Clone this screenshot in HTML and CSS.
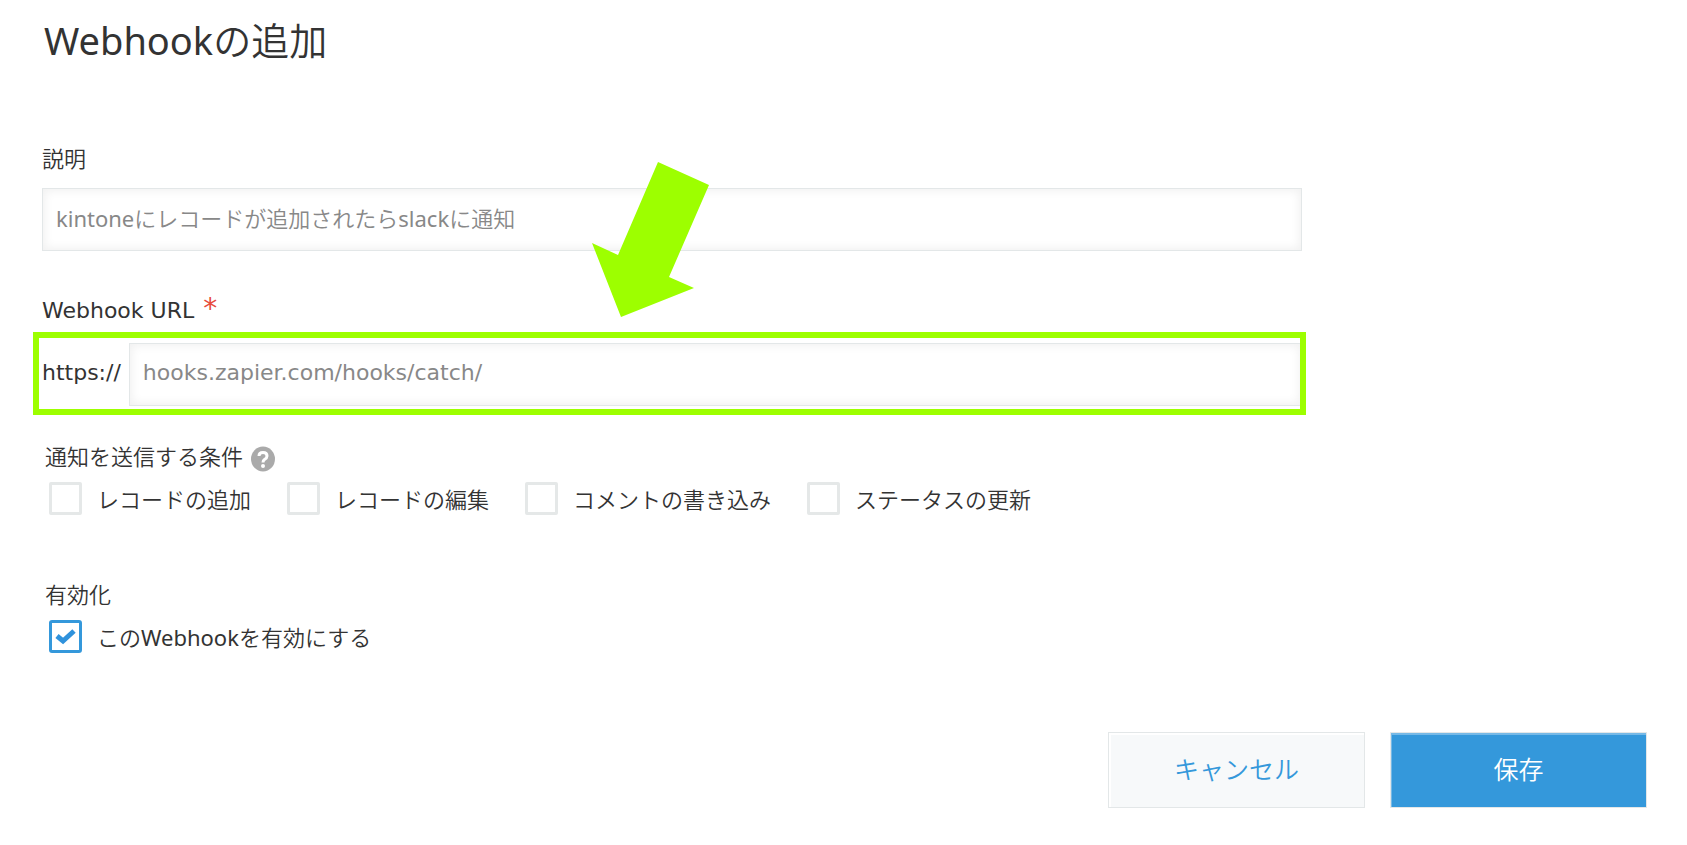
FILE: index.html
```html
<!DOCTYPE html>
<html lang="ja">
<head>
    <meta charset="UTF-8">
    <meta name="viewport" content="width=device-width, initial-scale=1.0">
    <title>Webhookの追加</title>
    <link rel="stylesheet" href="styles.css">
</head>
<body>
    <form class="webhook-form">
        <h1>Webhookの追加</h1>

        <div class="fields">
            <div class="field">
                <label for="description">説明</label>
                <input type="text" id="description" class="text-input" value="kintoneにレコードが追加されたらslackに通知">
            </div>

            <div class="field url-field">
                <label for="url" class="latin">Webhook URL <span class="required">*</span></label>
                <div class="url-row">
                    <span class="latin scheme">https://</span>
                    <input type="text" id="url" class="text-input latin" value="hooks.zapier.com/hooks/catch/">
                </div>
                <svg class="arrow" width="118" height="156" viewBox="0 0 118 156" aria-hidden="true">
                    <path d="M66 0 L117 23 L77 115 L102 126 L29 155 L0 81 L26 93 Z" fill="#9dff00"/>
                </svg>
            </div>
        </div>

        <fieldset class="conditions">
            <legend>通知を送信する条件
                <svg class="help" width="24" height="26" viewBox="0 0 24 26" aria-hidden="true">
                    <ellipse cx="12" cy="13" rx="12" ry="12.500" fill="#aaa"/>
                    <path d="M8 10 Q8 6.500 12 6.500 Q16 6.500 16 10 Q16 12 13.500 13.500 Q12 14.500 12 16.500" fill="none" stroke="#fff" stroke-width="3"/>
                    <circle cx="12" cy="20" r="2" fill="#fff"/>
                </svg>
            </legend>
            <div class="checks">
                <label class="check"><input type="checkbox">レコードの追加</label>
                <label class="check"><input type="checkbox">レコードの編集</label>
                <label class="check"><input type="checkbox">コメントの書き込み</label>
                <label class="check"><input type="checkbox">ステータスの更新</label>
            </div>
        </fieldset>

        <fieldset class="activation">
            <legend>有効化</legend>
            <div class="checks">
                <label class="check">
                    <span class="tick-box">
                        <input type="checkbox" checked>
                        <svg class="tick" width="21" height="17" viewBox="0 0 21 17" aria-hidden="true">
                            <path d="M2 8 L8 13 L19 3" fill="none" stroke="#2f92dc" stroke-width="5"/>
                        </svg>
                    </span>このWebhookを有効にする
                </label>
            </div>
        </fieldset>

        <div class="buttons">
            <button type="button" class="cancel">キャンセル</button>
            <button type="submit" class="save">保存</button>
        </div>
    </form>
</body>
</html>
```
FILE: styles.css
```css
* {
    box-sizing: border-box;
}
body {
    margin: 0;
    background-color: #fff;
    color: #333;
    font-family: "Noto Sans", "Noto Sans CJK JP DemiLight", "Noto Sans CJK JP Light", "Noto Sans CJK JP", sans-serif;
    font-size: 22px;
    line-height: 32px;
}
.latin {
    font-family: "DejaVu Sans", "Noto Sans CJK JP", sans-serif;
}
.webhook-form {
    padding: 16px 40px 36px 42px;
}
h1 {
    margin: 0;
    padding-left: 2px;
    font-size: 38px;
    font-weight: 400;
    line-height: 48px;
}
.fields {
    width: 78.5%;
    margin-top: 78px;
}
.field > label {
    display: block;
}
.text-input {
    width: 100%;
    height: 63px;
    padding: 0 13px 6px;
    border: 1px solid #e3e7e8;
    background-color: #fff;
    box-shadow: inset 0 0 10px 2px #f1f1f1;
    color: #888;
    font-size: 22px;
    outline: none;
}
.field .text-input {
    margin-top: 14px;
}
.text-input:not(.latin) {
    font-family: inherit;
}
.url-field {
    position: relative;
    margin-top: 44px;
}
.required {
    margin-left: 2px;
    color: #e74c3c;
    font-size: 28px;
    line-height: 24px;
}
.url-row {
    position: relative;
    display: flex;
    align-items: center;
    gap: 8px;
    margin-top: 16px;
}
.scheme {
    padding-bottom: 4px;
}
.url-row .text-input {
    flex: 1;
    margin-top: 0;
    padding-bottom: 4px;
}
/* highlight frame around the URL row */
.url-row::after {
    content: "";
    position: absolute;
    top: -11px;
    right: -4px;
    bottom: -9px;
    left: -9px;
    border: 6px solid #9dff00;
    pointer-events: none;
}
.arrow {
    position: absolute;
    left: 550px;
    bottom: 88px;
    pointer-events: none;
}
fieldset {
    min-width: 0;
    margin: 0;
    padding: 0 3px;
    border: 0;
}
legend {
    padding: 0;
}
.conditions {
    margin-top: 34px;
}
.help {
    margin-left: 2px;
    vertical-align: middle;
}
.checks {
    display: flex;
    flex-wrap: wrap;
    gap: 36px;
    padding: 10px 4px 0;
}
.check {
    display: flex;
    align-items: center;
    gap: 15px;
}
.check input {
    appearance: none;
    display: block;
    width: 33px;
    height: 33px;
    margin: 0;
    border: 3px solid #e5e8e8;
    border-radius: 2px;
    background-color: #fff;
}
.check input:checked {
    border-color: #3498db;
    border-radius: 3px;
}
.tick-box {
    position: relative;
}
.tick {
    position: absolute;
    top: 8px;
    left: 6px;
    pointer-events: none;
}
.activation {
    margin-top: 63px;
}
.buttons {
    display: flex;
    justify-content: flex-end;
    gap: 25px;
    margin-top: 79px;
}
button {
    width: 257px;
    height: 76px;
    padding: 0 0 5px;
    border: 1px solid #e3e7e8;
    font-family: inherit;
    font-size: 25px;
    cursor: pointer;
}
.cancel {
    background-color: #f7f9fa;
    box-shadow: inset 1px 1px 0 1px #fff;
    color: #3498db;
}
.save {
    background-color: #3498db;
    box-shadow: inset 1px 2px 0 #75b9e7;
    color: #fff;
}
```
